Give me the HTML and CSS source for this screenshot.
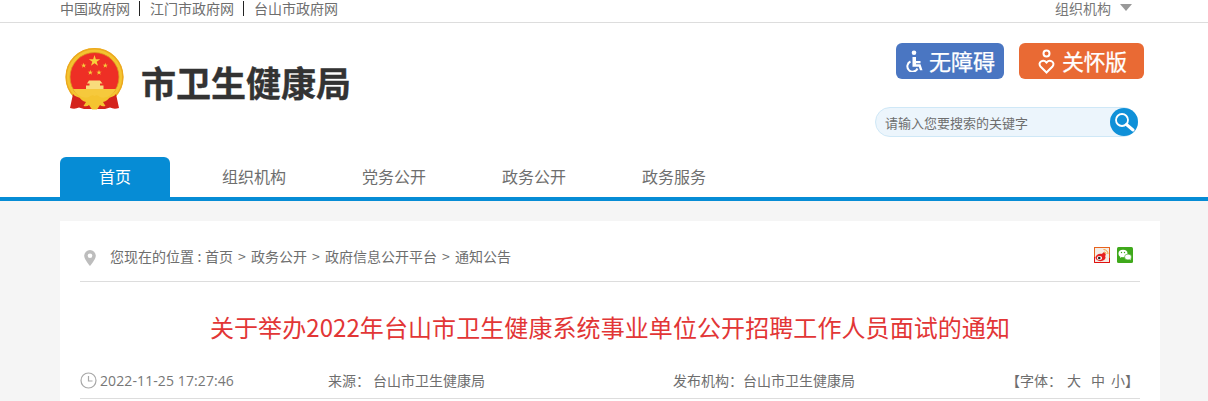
FILE: index.html
```html
<!DOCTYPE html>
<html lang="zh-CN">
<head>
<meta charset="utf-8">
<title>关于举办2022年台山市卫生健康系统事业单位公开招聘工作人员面试的通知</title>
<link rel="stylesheet" href="styles.css">
</head>
<body>
<div class="topbar">
  <div class="wrap topbar-in">
    <div class="toplinks"><a>中国政府网</a><i></i><a>江门市政府网</a><i></i><a>台山市政府网</a></div>
    <div class="orgs">组织机构<span class="caret"></span></div>
  </div>
</div>
<header class="wrap head">
  <div class="brand">
    <svg class="emblem" width="60" height="64" viewBox="0 0 60 64">
      <defs><path id="st" d="M0-1 .224-.309H.951L.363.118.588.809 0 .382-.588.809-.363.118-.951-.309H-.224Z" fill="#f7d03c"/></defs>
      <circle cx="30.500" cy="30" r="29" fill="#f4c430"/>
      <circle cx="30.500" cy="30" r="28.300" fill="none" stroke="#eca81f" stroke-width="1.400"/>
      <circle cx="30.500" cy="30" r="24.500" fill="#ee2f25" stroke="#d99a20" stroke-width=".8"/>
      <use href="#st" transform="translate(30.500 14) scale(6)"/>
      <use href="#st" transform="translate(19.700 18.500) scale(2.800)"/>
      <use href="#st" transform="translate(41.300 18.500) scale(2.800)"/>
      <use href="#st" transform="translate(26.300 25.500) scale(2.800)"/>
      <use href="#st" transform="translate(35 25.500) scale(2.800)"/>
      <path d="M9 42 H52 A24.500 24.500 0 0 1 9 42Z" fill="#f6c93c"/>
      <path d="M25 33.500h11l2.500 3h-2.500v2h3.500v3.500H22v-3.500h3.500v-2H23z" fill="#f8dc7c"/>
      <path d="M9 47 Q11 50 18 51 Q25 55 30.500 52 Q36 55 43 51 Q50 50 52 47 L55 61 Q50 62.500 46 60.500 L41 62 H20 L15 60.500 Q11 62.500 6 61Z" fill="#d4231c"/>
      <path d="M14 48 Q20 52 25 50 Q28 47 30.500 49 Q33 47 36 50 Q41 52 47 48 Q44 54 39 55 L41.500 59 Q38 60 36 58 L33 62.500 H28 L25 58 Q23 60 19.500 59 L22 55 Q17 54 14 48Z" fill="#f4c430"/>
    </svg>
    <h1 class="site">市卫生健康局</h1>
  </div>
  <div class="tools">
    <div class="btns">
      <a class="btn btn-blue">
        <svg width="20" height="22" viewBox="0 0 20 22"><circle cx="9" cy="2.800" r="2.300" fill="#fff"/><path d="M7.500 7h3.500v4h4.500v2.200H11v1h4.500l2 6h-2.500l-1.200-3.500H7.500z" fill="#fff"/><path d="M5.500 11.500a5.300 5.300 0 1 0 7 7" fill="none" stroke="#fff" stroke-width="2"/></svg>
        <span>无障碍</span>
      </a>
      <a class="btn btn-orange">
        <svg width="17" height="25" viewBox="0 0 17 25"><circle cx="8.500" cy="4.500" r="3" fill="none" stroke="#fff" stroke-width="2"/><path d="M8.500 23.500 L2.500 17.500C-.8 13.500 5 9.500 8.500 13.500 12 9.500 17.800 13.500 14.500 17.500Z" fill="none" stroke="#fff" stroke-width="2"/></svg>
        <span>关怀版</span>
      </a>
    </div>
    <div class="search">
      <span class="ph">请输入您要搜索的关键字</span>
      <span class="sbtn"><svg width="22" height="22" viewBox="0 0 22 22"><circle cx="9" cy="9" r="6" fill="none" stroke="#fff" stroke-width="1.800"/><path d="M13.500 13.500L20 19" stroke="#fff" stroke-width="3" stroke-linecap="round"/></svg></span>
    </div>
  </div>
</header>
<nav class="nav">
  <div class="wrap nav-in">
    <a class="tab active">首页</a>
    <a class="tab">组织机构</a>
    <a class="tab">党务公开</a>
    <a class="tab">政务公开</a>
    <a class="tab">政务服务</a>
  </div>
</nav>
<main class="page">
  <div class="wrap card">
    <div class="crumb">
      <div class="crumb-l">
        <svg class="pin" width="12" height="16" viewBox="0 0 12 16"><path fill-rule="evenodd" d="M6 0a5.800 5.800 0 0 1 5.800 5.800C11.800 9.500 6 16 6 16S.2 9.500.2 5.800A5.800 5.800 0 0 1 6 0zm0 3.500a2.300 2.300 0 1 0 0 4.600 2.300 2.300 0 0 0 0-4.600z" fill="#bdbdbd"/></svg>
        <span>您现在的位置</span><span class="colon">:</span><span>首页</span><span class="sep">&gt;</span><span>政务公开</span><span class="sep">&gt;</span><span>政府信息公开平台</span><span class="sep">&gt;</span><span>通知公告</span>
      </div>
      <div class="share">
        <svg width="16" height="16" viewBox="0 0 16 16"><rect x=".5" y=".5" width="15" height="15" fill="#f4ece6" stroke="#e8631c"/><path d="M.5 10v5.500h15V11" fill="none" stroke="#e01010"/><ellipse cx="6.500" cy="10.500" rx="5" ry="3.700" fill="#e62020"/><path d="M6 8.500l4-3.500 1.800 2.500-1.500 4z" fill="#e62020"/><ellipse cx="5.500" cy="11" rx="2.600" ry="2" fill="#fff"/><circle cx="5.300" cy="11" r="1.300" fill="#222"/><path d="M9.500 2.500a4.500 4.500 0 0 1 4.500 4.500M10 5a2 2 0 0 1 2 2" fill="none" stroke="#f2a33a"/></svg>
        <svg width="16" height="16" viewBox="0 0 16 16"><rect width="16" height="16" rx="1.500" fill="#3fa91b"/><ellipse cx="6" cy="6.500" rx="4.500" ry="3.700" fill="#fff"/><path d="M3.500 9l-.5 2 2.500-1.500z" fill="#fff"/><ellipse cx="11" cy="10" rx="3.500" ry="2.900" stroke="#3fa91b" stroke-width=".6" fill="#fff"/><path d="M12.500 12l1 1.500V11z" fill="#fff"/><circle cx="4.500" cy="5.500" r=".7" fill="#3fa91b"/><circle cx="7.500" cy="5.500" r=".7" fill="#3fa91b"/></svg>
      </div>
    </div>
    <h2 class="title">关于举办2022年台山市卫生健康系统事业单位公开招聘工作人员面试的通知</h2>
    <div class="meta">
      <div class="m-date">
        <svg width="17" height="17" viewBox="0 0 17 17"><circle cx="8.500" cy="8.500" r="7.500" fill="none" stroke="#a8a8a8" stroke-width="1.200"/><path d="M8.500 4v5h4" fill="none" stroke="#a8a8a8" stroke-width="1.200"/></svg>
        <span>2022-11-25 17:27:46</span>
      </div>
      <div class="m-src"><span class="lab">来源：</span>台山市卫生健康局</div>
      <div class="m-org">发布机构：台山市卫生健康局</div>
      <div class="m-font">【字体：<span class="sz s1">大</span><span class="sz s2">中</span><span class="sz s3">小</span>】</div>
    </div>
  </div>
</main>
</body>
</html>
```
FILE: styles.css
```css
* { box-sizing: border-box; }
html, body { margin: 0; padding: 0; height: 100%; overflow: hidden; }
body {
  font-family: "Noto Sans CJK SC", "Open Sans", sans-serif;
  color: #6e6e6e;
  background: #fff;
  font-size: 14px;
}
.wrap { width: 1100px; margin-left: 60px; }

.topbar { height: 23px; border-bottom: 1px solid #ddd; }
.topbar-in { display: flex; justify-content: space-between; height: 22px; width: 1072px; }
.toplinks { display: flex; align-items: center; height: 16px; font-size: 14px; line-height: 16px; }
.toplinks i { width: 1px; height: 15px; background: #222; margin: 0 10px 0 9px; }
.orgs { display: flex; height: 16px; line-height: 16px; font-size: 14px; color: #777; }
.caret { width: 0; height: 0; margin: 4px 0 0 9px; border: 6px solid transparent; border-top: 7px solid #999; border-bottom: 0; }

.head { display: flex; justify-content: space-between; height: 134px; width: 1084px; }
.brand { display: flex; align-items: flex-start; padding-top: 23px; }
.emblem { margin: 1px 0 0 4px; }
.site { margin: 13px 0 0 17px; font-size: 35px; line-height: 46px; font-weight: 700; color: #333; -webkit-text-stroke: .4px #333; }

.tools { display: flex; flex-direction: column; align-items: flex-end; padding-top: 20px; }
.btns { display: flex; gap: 15px; }
.btn { display: flex; align-items: center; height: 36px; border-radius: 6px; color: #fff; font-size: 22px; }
.btn span { line-height: 34px; margin-top: -3px; -webkit-text-stroke: .25px #fff; }
.btn-blue { width: 108px; background: #4a76c2; gap: 4px; padding-left: 9px; }
.btn-orange { width: 125px; background: #e96a34; gap: 7px; padding-left: 19px; }
.btn-orange span { letter-spacing: -.5px; }

.search { position: relative; display: flex; align-items: center; width: 263px; height: 30px; margin: 28px 6px 0 0; background: #ecf5fc; border: 1px solid #cfe8f7; border-radius: 15px; padding-left: 9px; font-size: 13px; }
.sbtn { position: absolute; right: -1px; top: 0; width: 28px; height: 28px; border-radius: 50%; background: #0f90d8; display: flex; align-items: center; justify-content: center; }

.nav { height: 44px; border-bottom: 4px solid #068cd5; }
.nav-in { display: flex; height: 40px; gap: 76px; }
.tab { font-size: 16px; line-height: 39px; text-align: center; }
.tab.active { width: 110px; margin-right: -24px; background: #068cd5; color: #fff; border-radius: 6px 6px 0 0; }

.page { background: #f5f5f5; height: 200px; padding-top: 20px; }
.card { background: #fff; height: 180px; padding: 0 20px; }
.crumb { display: flex; justify-content: space-between; height: 61px; border-bottom: 1px solid #ddd; padding-top: 25px; }
.crumb-l { display: flex; align-items: center; height: 20px; line-height: 18px; font-size: 14px; }
.pin { margin: 4px 14px 0 4px; flex: none; }
.colon { width: 11px; text-align: center; }
.sep { width: 18px; text-align: center; }
.share { display: flex; gap: 7px; height: 16px; margin: 1px 7px 0 0; }

.title { margin: 0; padding-top: 26px; height: 79px; text-align: center; font-size: 24px; letter-spacing: .08px; line-height: 38px; font-weight: 400; color: #e23636; }

.meta { display: flex; align-items: center; height: 38px; border-bottom: 1px solid #ddd; padding-top: 1px; font-size: 14px; }
.m-date { display: flex; align-items: center; gap: 3px; width: 248px; margin-top: 1px; font-size: 14px; letter-spacing: .1px; color: #777; font-family: "Open Sans", "Noto Sans CJK SC", sans-serif; }
.m-src { width: 345px; }
.lab { margin-right: 3px; }
.m-org { width: 333px; }
.m-font { display: flex; white-space: nowrap; }
.s1 { margin-left: 5px; }
.s2 { margin-left: 10px; }
.s3 { margin-left: 6px; }
```
